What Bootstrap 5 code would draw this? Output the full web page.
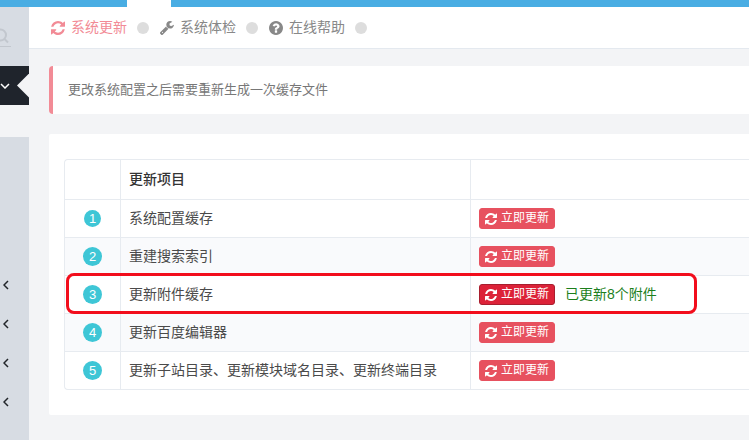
<!DOCTYPE html>
<html lang="zh-CN">

<head>
    <meta charset="UTF-8">
    <meta name="viewport" content="width=device-width, initial-scale=1.0">
    <title>系统更新</title>
    <link rel="stylesheet" href="https://cdn.jsdelivr.net/npm/bootstrap@5.3.0/dist/css/bootstrap.min.css">
    <style>
        html, body {
            height: 440px;
            overflow: hidden;
        }

        body {
            width: 749px;
            background-color: #f3f4f6;
            font-family: "Liberation Sans", "Noto Sans CJK SC", sans-serif;
            font-size: 14px;
            color: #4a4a4a;
        }

        .top-seg {
            height: 7px;
            background-color: #49ade3;
            width: 127px;
        }

        .top-gap {
            height: 7px;
            width: 44px;
            background-color: #fff;
        }

        .page-wrap {
            height: 433px;
        }

        .side-col {
            width: 29px;
            flex: 0 0 29px;
            overflow: hidden;
        }

        .side-search {
            height: 59px;
            padding-top: 18px;
            background-color: #d7dce3;
        }

        .search-line {
            width: 11px;
            height: 22px;
            border-bottom: 1px solid #c2c7ce;
            overflow: hidden;
        }

        .side-active {
            height: 39px;
            background-color: #1f242c;
        }

        .side-gap {
            height: 32px;
            background-color: #f3f4f6;
        }

        .side-rest {
            background-color: #d7dce3;
            padding-top: 128px;
        }

        .side-row {
            height: 39px;
            padding-left: 3px;
        }

        .side-notch {
            width: 12px;
            height: 24px;
            background-color: #f3f4f6;
            clip-path: polygon(0 50%, 100% 0, 100% 100%);
        }

        .main-col {
            min-width: 0;
        }

        .step-bar {
            height: 42px;
            padding-left: 22px;
            background-color: #fff;
            border-bottom: 1px solid #e4e9ef;
            color: #888;
        }

        .step-item svg {
            margin-right: 6px;
        }

        .step-item.on {
            color: #f28b96;
        }

        .step-dot {
            width: 12px;
            height: 12px;
            margin: 0 11px 0 10px;
            border-radius: 50%;
            background-color: #ddd;
        }

        .note-box {
            height: 48px;
            margin: 17px 0 20px 20px;
            padding-left: 15px;
            background-color: #fff;
            border-left: 4px solid #f28b96;
            border-radius: 4px 0 0 4px;
            font-size: 13px;
            color: #777;
        }

        .panel-box {
            height: 281px;
            margin-left: 20px;
            padding: 25px 0 25px 15px;
            background-color: #fff;
            border-radius: 2px 0 0 2px;
        }

        .update-table {
            width: 100%;
            table-layout: fixed;
            border: 1px solid #e7ebf0;
            border-right: 0;
            border-radius: 4px 0 0 4px;
            border-collapse: separate;
            border-spacing: 0;
        }

        .update-table td, .update-table th {
            height: 38px;
            padding: 0 8px;
            vertical-align: middle;
            border-top: 1px solid #e7ebf0;
            border-left: 1px solid #e7ebf0;
            font-weight: 400;
        }

        .update-table tr:first-child th {
            height: 39px;
            border-top: 0;
            font-weight: 500;
            color: #333;
        }

        .update-table th:first-child, .update-table td:first-child {
            border-left: 0;
            padding: 0;
            text-align: center;
        }

        .update-table tr.odd-row td {
            background-color: #f9fafc;
        }

        .col-num {
            width: 55px;
        }

        .col-name {
            width: 350px;
        }

        .num-dot {
            width: 19px;
            height: 19px;
            border-radius: 50%;
            background-color: #3ec6d6;
            color: #fff;
            font-size: 13px;
            line-height: 19px;
        }

        .num-dot.slim {
            width: 17px;
            height: 17px;
            line-height: 17px;
        }

        .refresh-btn {
            width: 76px;
            height: 21px;
            padding: 0;
            border: 1px solid #e7515f;
            border-radius: 3px;
            background-color: #e7515f;
            color: #fff;
            font-size: 12px;
            line-height: 19px;
            vertical-align: middle;
        }

        .refresh-btn.pressed {
            background-color: #dc2238;
            border-color: #a81e2e;
        }

        .done-text {
            margin-left: 10px;
            color: #1c7f1c;
            vertical-align: middle;
        }

        .mark-box {
            position: absolute;
            left: 66px;
            top: 273px;
            width: 631px;
            height: 41px;
            border: 3px solid #f20d1c;
            border-radius: 8px;
            pointer-events: none;
        }
    </style>
</head>

<body>
    <svg class="d-none">
        <symbol id="ic-refresh" viewBox="128 128 1536 1536"><path fill="currentColor" d="M1639 1056q0 5-1 7-64 268-268 434.5t-478 166.5q-146 0-282.5-55t-243.5-157l-129 129q-19 19-45 19t-45-19-19-45v-448q0-26 19-45t45-19h448q26 0 45 19t19 45-19 45l-137 137q71 66 161 102t187 36q134 0 250-65t186-179q11-17 53-117 8-23 30-23h192q13 0 22.5 9.5t9.5 22.5zm25-800v448q0 26-19 45t-45 19h-448q-26 0-45-19t-19-45 19-45l138-138q-148-137-349-137-134 0-250 65t-186 179q-11 17-53 117-8 23-30 23h-199q-13 0-22.5-9.5t-9.5-22.5v-7q65-268 270-434.5t480-166.5q146 0 284 55.5t245 156.5l130-129q19-19 45-19t45 19 19 45z"/></symbol>
        <symbol id="ic-wrench" viewBox="90 128 1650 1650"><path fill="currentColor" d="M448 1472q0-26-19-45t-45-19-45 19-19 45 19 45 45 19 45-19 19-45zm644-420l-682 682q-37 37-90 37-52 0-91-37l-106-108q-38-36-38-90 0-53 38-91l681-681q39 98 114.5 173.5t173.5 114.5zm634-435q0 39-23 106-47 134-164.5 217.5t-258.5 83.5q-185 0-316.5-131.5t-131.5-316.5 131.5-316.5 316.5-131.5q58 0 121.5 16.5t107.5 46.5q16 11 16 28t-16 28l-293 169v224l193 107q5-3 79-48.5t135.5-81 70.5-35.5q15 0 23.5 10t8.5 25z"/></symbol>
        <symbol id="ic-help" viewBox="128 128 1536 1536"><path fill="currentColor" d="M1024 1376v-192q0-14-9-23t-23-9h-192q-14 0-23 9t-9 23v192q0 14 9 23t23 9h192q14 0 23-9t9-23zm256-672q0-88-55.5-163t-138.5-116-170-41q-243 0-371 213-15 24 8 42l132 100q7 6 19 6 16 0 25-12 53-68 86-92 34-24 86-24 48 0 85.5 26t37.5 59q0 38-20 61t-68 45q-63 28-115.5 86.5t-52.5 125.5v36q0 14 9 23t23 9h192q14 0 23-9t9-23q0-19 21.5-49.5t54.5-49.5q32-18 49-28.5t46-35 44.5-48 28-60.5 12.5-81zm384 192q0 209-103 385.5t-279.5 279.5-385.5 103-385.5-103-279.5-279.5-103-385.5 103-385.5 279.5-279.5 385.5-103 385.5 103 279.5 279.5 103 385.5z"/></symbol>
        <symbol id="ic-left" viewBox="0 0 6 10"><polyline points="5,1 1,5 5,9" fill="none" stroke="currentColor" stroke-width="1.5"/></symbol>
    </svg>

    <div class="d-flex">
        <div class="top-seg"></div>
        <div class="top-gap"></div>
        <div class="top-seg flex-grow-1"></div>
    </div>

    <div class="d-flex page-wrap">
        <div class="side-col d-flex flex-column">
            <div class="side-search">
                <div class="search-line">
                    <svg width="9" height="21" viewBox="0 0 9 21" fill="none" stroke="#c2c7ce" stroke-width="2"><circle cx="0.5" cy="9" r="5.5"/><line x1="4.5" y1="13" x2="8" y2="16.5"/></svg>
                </div>
            </div>
            <div class="side-active d-flex align-items-center justify-content-between">
                <svg width="10" height="6" viewBox="0 0 10 6" fill="none" stroke="#fff" stroke-width="1.5"><polyline points="1,1 5,5 9,1"/></svg>
                <div class="side-notch"></div>
            </div>
            <div class="side-gap"></div>
            <div class="side-rest flex-grow-1">
                <div class="side-row d-flex align-items-center text-dark"><svg width="6" height="10"><use href="#ic-left"/></svg></div>
                <div class="side-row d-flex align-items-center text-dark"><svg width="6" height="10"><use href="#ic-left"/></svg></div>
                <div class="side-row d-flex align-items-center text-dark"><svg width="6" height="10"><use href="#ic-left"/></svg></div>
                <div class="side-row d-flex align-items-center text-dark"><svg width="6" height="10"><use href="#ic-left"/></svg></div>
            </div>
        </div>

        <div class="main-col flex-grow-1">
            <div class="step-bar d-flex align-items-center">
                <span class="step-item on d-flex align-items-center"><svg width="14" height="14"><use href="#ic-refresh"/></svg>系统更新</span>
                <span class="step-dot"></span>
                <span class="step-item d-flex align-items-center"><svg width="14" height="14"><use href="#ic-wrench"/></svg>系统体检</span>
                <span class="step-dot"></span>
                <span class="step-item d-flex align-items-center"><svg width="14" height="14"><use href="#ic-help"/></svg>在线帮助</span>
                <span class="step-dot"></span>
            </div>

            <div class="note-box d-flex align-items-center">更改系统配置之后需要重新生成一次缓存文件</div>

            <div class="panel-box">
                <table class="update-table">
                    <colgroup>
                        <col class="col-num">
                        <col class="col-name">
                        <col>
                    </colgroup>
                    <tr><th></th><th>更新项目</th><th></th></tr>
                    <tr>
                        <td><span class="num-dot slim d-inline-block">1</span></td>
                        <td>系统配置缓存</td>
                        <td><button class="refresh-btn" type="button"><svg width="12" height="12" class="me-1 align-text-bottom"><use href="#ic-refresh"/></svg>立即更新</button></td>
                    </tr>
                    <tr class="odd-row">
                        <td><span class="num-dot d-inline-block">2</span></td>
                        <td>重建搜索索引</td>
                        <td><button class="refresh-btn" type="button"><svg width="12" height="12" class="me-1 align-text-bottom"><use href="#ic-refresh"/></svg>立即更新</button></td>
                    </tr>
                    <tr>
                        <td><span class="num-dot d-inline-block">3</span></td>
                        <td>更新附件缓存</td>
                        <td><button class="refresh-btn pressed" type="button"><svg width="12" height="12" class="me-1 align-text-bottom"><use href="#ic-refresh"/></svg>立即更新</button><span class="done-text">已更新8个附件</span></td>
                    </tr>
                    <tr class="odd-row">
                        <td><span class="num-dot d-inline-block">4</span></td>
                        <td>更新百度编辑器</td>
                        <td><button class="refresh-btn" type="button"><svg width="12" height="12" class="me-1 align-text-bottom"><use href="#ic-refresh"/></svg>立即更新</button></td>
                    </tr>
                    <tr>
                        <td><span class="num-dot d-inline-block">5</span></td>
                        <td>更新子站目录、更新模块域名目录、更新终端目录</td>
                        <td><button class="refresh-btn" type="button"><svg width="12" height="12" class="me-1 align-text-bottom"><use href="#ic-refresh"/></svg>立即更新</button></td>
                    </tr>
                </table>
            </div>
        </div>
    </div>

    <div class="mark-box"></div>
</body>

</html>
